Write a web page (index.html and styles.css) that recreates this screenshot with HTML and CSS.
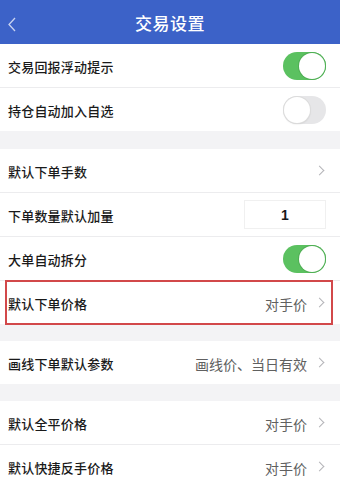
FILE: index.html
```html
<!DOCTYPE html>
<html lang="zh-CN">
<head>
    <meta charset="UTF-8">
    <meta name="viewport" content="width=device-width, initial-scale=1.0">
    <title>交易设置</title>
    <link rel="stylesheet" href="styles.css">
</head>
<body>

<!-- Top bar -->
<header class="topbar">
    <svg class="back" width="8" height="15" viewBox="0 0 8 15">
        <path d="M7 1 L1 7.5 L7 14" fill="none" stroke="#c9d3f0" stroke-width="1.3"/>
    </svg>
    <h1>交易设置</h1>
</header>

<section class="group">
    <div class="row">
        <span class="label">交易回报浮动提示</span>
        <span class="switch on"></span>
    </div>
    <div class="row">
        <span class="label">持仓自动加入自选</span>
        <span class="switch"></span>
    </div>
</section>

<section class="group">
    <div class="row">
        <span class="label">默认下单手数</span>
        <span class="arrow"></span>
    </div>
    <div class="row">
        <span class="label">下单数量默认加量</span>
        <span class="num-box">1</span>
    </div>
    <div class="row">
        <span class="label">大单自动拆分</span>
        <span class="switch on"></span>
    </div>
    <div class="row marked">
        <span class="label">默认下单价格</span>
        <span class="value">对手价</span>
        <span class="arrow"></span>
    </div>
</section>

<section class="group">
    <div class="row">
        <span class="label">画线下单默认参数</span>
        <span class="value">画线价、当日有效</span>
        <span class="arrow"></span>
    </div>
</section>

<section class="group">
    <div class="row">
        <span class="label">默认全平价格</span>
        <span class="value">对手价</span>
        <span class="arrow"></span>
    </div>
    <div class="row">
        <span class="label">默认快捷反手价格</span>
        <span class="value">对手价</span>
        <span class="arrow"></span>
    </div>
</section>

</body>
</html>
```

FILE: styles.css
```css
body {
    margin: 0;
    padding: 0;
    background-color: #f3f3f5;
    font-family: "Noto Sans CJK SC", "Noto Sans", sans-serif;
    color: #1a1a1a;
    overflow: hidden;
}

/* Top bar */
.topbar {
    height: 44px;
    background-color: #3c62c8;
    display: flex;
    align-items: center;
    justify-content: center;
    position: relative;
}

.topbar h1 {
    margin: 0;
    font-size: 17px;
    font-weight: 500;
    color: #fff;
    letter-spacing: 0.5px;
}

.back {
    position: absolute;
    left: 8px;
    top: 17px;
}

/* Setting rows */
.group {
    background-color: #fff;
    margin-bottom: 17px;
}

.group:first-of-type {
    margin-bottom: 18px;
}

.row {
    height: 43px;
    display: flex;
    align-items: center;
    padding: 0 15px 0 8px;
    border-bottom: 1px solid #ececee;
}

.row:last-child {
    border-bottom: none;
}

.label {
    flex: 1;
    font-size: 13px;
    font-weight: 500;
    letter-spacing: 0.2px;
    padding-top: 2px;
}

.value {
    font-size: 14px;
    color: #606060;
    margin-right: 9px;
    padding-top: 2px;
}

.arrow {
    width: 6px;
    height: 6px;
    border-top: 1.2px solid #b4b4b8;
    border-right: 1.2px solid #b4b4b8;
    transform: rotate(45deg);
    margin-right: 2px;
}

.num-box {
    width: 80px;
    height: 27px;
    border: 1px solid #f0f0f0;
    display: flex;
    align-items: center;
    justify-content: center;
    font-family: "Liberation Sans", Arial, sans-serif;
    font-size: 14px;
    font-weight: bold;
    margin-right: -1px;
}

/* Switch */
.switch {
    width: 43px;
    height: 28px;
    border-radius: 14px;
    background-color: #e6e6e8;
    position: relative;
    margin-right: -1px;
}

.switch::after {
    content: "";
    position: absolute;
    top: 1px;
    left: 1px;
    width: 26px;
    height: 26px;
    border-radius: 50%;
    background-color: #fff;
    box-shadow: 0 0 0 1px #dcdcdc, 0 1px 2px rgba(0, 0, 0, 0.15);
}

.switch.on {
    background-color: #5bc160;
}

.switch.on::after {
    left: 16px;
    box-shadow: 0 0 0 1px #4fae54;
}

/* Red annotation frame */
.marked {
    position: relative;
}

.marked::after {
    content: "";
    position: absolute;
    left: 5px;
    right: 7px;
    top: -1px;
    bottom: -1px;
    border: 2px solid #d2484a;
}
```
